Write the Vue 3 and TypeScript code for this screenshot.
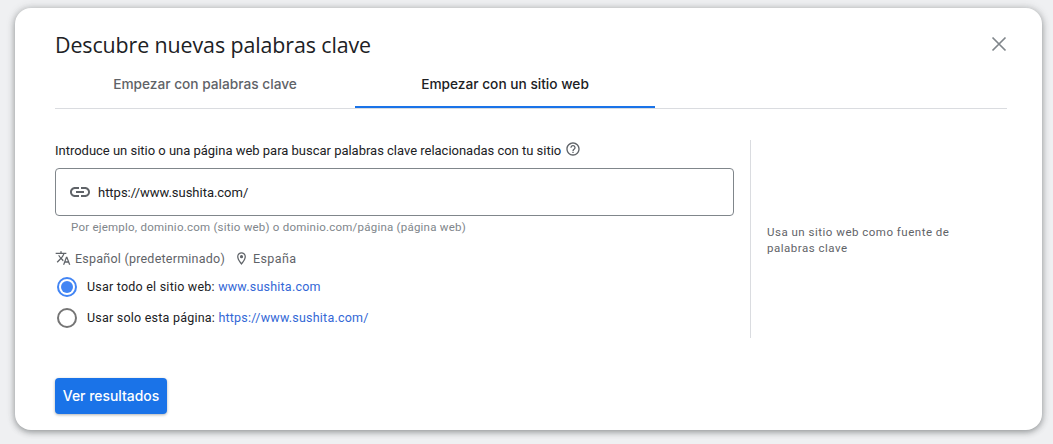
<script setup lang="ts">
const title = 'Descubre nuevas palabras clave'
</script>

<template>
  <div class="page">
    <section class="card">
      <header class="head">
        <h1>{{ title }}</h1>
        <svg class="close" viewBox="0 0 16 16" width="16" height="16"><path d="M1.5 1.5 14.5 14.5M14.5 1.5 1.5 14.5" stroke="#80868b" stroke-width="1.7" fill="none"/></svg>
      </header>
      <nav class="tabs">
        <div class="tab">Empezar con palabras clave</div>
        <div class="tab active">Empezar con un sitio web</div>
      </nav>
      <div class="body">
        <div class="main">
          <div class="label">
            <span>Introduce un sitio o una página web para buscar palabras clave relacionadas con tu sitio</span>
            <svg class="help" viewBox="0 0 24 24" width="16" height="16"><path fill="#5f6368" d="M11 18h2v-2h-2v2zm1-16C6.48 2 2 6.48 2 12s4.48 10 10 10 10-4.48 10-10S17.52 2 12 2zm0 18c-4.41 0-8-3.59-8-8s3.59-8 8-8 8 3.59 8 8-3.59 8-8 8zm0-14c-2.21 0-4 1.79-4 4h2c0-1.1.9-2 2-2s2 .9 2 2c0 2-3 1.75-3 5h2c0-2.25 3-2.5 3-5 0-2.21-1.79-4-4-4z"/></svg>
          </div>
          <div class="field">
            <svg viewBox="0 0 24 24" width="24" height="24"><path fill="#5f6368" d="M3.9 12c0-1.71 1.39-3.1 3.1-3.1h4V7H7c-2.76 0-5 2.24-5 5s2.24 5 5 5h4v-1.9H7c-1.71 0-3.1-1.39-3.1-3.1zM8 13h8v-2H8v2zm9-6h-4v1.9h4c1.71 0 3.1 1.39 3.1 3.1s-1.39 3.1-3.1 3.1h-4V17h4c2.76 0 5-2.24 5-5s-2.24-5-5-5z"/></svg>
            <span>https://www.sushita.com/</span>
          </div>
          <div class="hint">Por ejemplo, dominio.com (sitio web) o dominio.com/página (página web)</div>
          <div class="locale">
            <svg viewBox="0 0 24 24" width="16" height="16"><path fill="#5f6368" d="M12.87 15.07l-2.54-2.51.03-.03c1.74-1.94 2.98-4.17 3.71-6.53H17V4h-7V2H8v2H1v1.99h11.17C11.5 7.92 10.44 9.75 9 11.35 8.07 10.32 7.3 9.19 6.69 8h-2c.73 1.63 1.73 3.17 2.98 4.56l-5.09 5.02L4 19l5-5 3.11 3.11.76-2.04zM18.5 10h-2L12 22h2l1.12-3h4.75L21 22h2l-4.5-12zm-2.62 7l1.62-4.33L19.12 17h-3.24z"/></svg>
            <span>Español (predeterminado)</span>
            <svg class="pin" viewBox="0 0 24 24" width="15" height="15"><path fill="#5f6368" d="M12 2C8.13 2 5 5.13 5 9c0 5.25 7 13 7 13s7-7.75 7-13c0-3.87-3.13-7-7-7zM7 9c0-2.76 2.24-5 5-5s5 2.24 5 5c0 2.88-2.88 7.19-5 9.88C9.92 16.21 7 11.85 7 9z"/><circle fill="#5f6368" cx="12" cy="9" r="2.5"/></svg>
            <span class="country">España</span>
          </div>
          <div class="radio first">
            <span class="dot on"></span>
            <span>Usar todo el sitio web: <a>www.sushita.com</a></span>
          </div>
          <div class="radio">
            <span class="dot"></span>
            <span>Usar solo esta página: <a>https://www.sushita.com/</a></span>
          </div>
        </div>
        <aside class="side">Usa un sitio web como fuente de palabras clave</aside>
      </div>
      <button class="cta">Ver resultados</button>
    </section>
  </div>
</template>

<style>
html, body { margin: 0; background: #eef0f2; }
</style>

<style scoped>
.page {
  width: 1053px;
  height: 444px;
  box-sizing: border-box;
  padding: 8px 11px 14px 15px;
  background: #eff0f2;
  overflow: hidden;
  font-family: Roboto, "Liberation Sans", sans-serif;
}
.card {
  height: 422px;
  box-sizing: border-box;
  padding: 0 35px 0 40px;
  background: #fff;
  border-radius: 16px;
  box-shadow: 0 2px 6px rgba(60, 64, 67, 0.45), 0 0 10px rgba(60, 64, 67, 0.18);
  display: flex;
  flex-direction: column;
  align-items: flex-start;
}
.head {
  width: 100%;
  height: 58px;
  display: flex;
  justify-content: space-between;
  align-items: flex-start;
  padding-top: 23px;
  box-sizing: border-box;
}
h1 {
  margin: 0;
  font: 400 21.4px/28px "Open Sans", sans-serif;
  color: #202124;
  letter-spacing: -0.1px;
}
.close { margin-top: 5px; }
.tabs {
  width: 952px;
  height: 42px;
  display: flex;
  border-bottom: 1px solid #dadce0;
}
.tab {
  width: 300px;
  height: 42px;
  box-sizing: border-box;
  text-align: center;
  font: 500 13.7px/36px Inter, sans-serif;
  color: #5f6368;
}
.tab.active {
  color: #202124;
  border-bottom: 2px solid #1a73e8;
}
.body {
  width: 100%;
  margin-top: 31px;
  display: flex;
  height: 198px;
}
.main {
  width: 695px;
  border-right: 1px solid #dadce0;
}
.label {
  display: flex;
  align-items: flex-start;
  gap: 4px;
  height: 28px;
  font-size: 13px;
  line-height: 22px;
  color: #202124;
  letter-spacing: -0.015px;
}
.help { margin-top: 1px; }
.field {
  width: 679px;
  height: 48px;
  box-sizing: border-box;
  border: 1px solid #80868b;
  border-radius: 4px;
  display: flex;
  align-items: center;
  gap: 6px;
  padding-left: 12px;
  font-size: 13px;
  color: #202124;
  letter-spacing: -0.02px;
}
.hint {
  margin: 4px 0 0 16px;
  font-size: 11.5px;
  line-height: 14px;
  color: #80868b;
  letter-spacing: 0.23px;
}
.locale {
  margin-top: 14px;
  height: 20px;
  display: flex;
  align-items: center;
  gap: 4px;
  font-size: 12.5px;
  color: #5f6368;
  letter-spacing: 0.23px;
}
.pin { margin-left: 5px; margin-right: 0; }
.country { letter-spacing: 0.4px; }
.radio {
  height: 31px;
  display: flex;
  align-items: center;
  gap: 10px;
  padding-left: 2px;
  font-size: 12.5px;
  color: #202124;
  letter-spacing: 0.22px;
}
.radio.first { margin-top: 3px; }
.radio a { color: #3367d6; }
.dot {
  width: 20px;
  height: 20px;
  box-sizing: border-box;
  border: 2px solid #757575;
  border-radius: 50%;
  display: flex;
  align-items: center;
  justify-content: center;
}
.dot.on { border-color: #4285f4; }
.dot.on::after {
  content: "";
  width: 12px;
  height: 12px;
  border-radius: 50%;
  background: #4285f4;
}
.side {
  width: 200px;
  margin: 84px 0 0 16px;
  font-size: 11.5px;
  line-height: 16px;
  color: #5f6368;
  letter-spacing: 0.5px;
}
.cta {
  margin-top: 40px;
  width: 112px;
  height: 36px;
  padding: 0;
  border: none;
  border-radius: 4px;
  background: #1a73e8;
  color: #fff;
  font: 500 13.9px/36px Inter, sans-serif;
  box-shadow: 0 1px 3px rgba(60, 64, 67, 0.4);
}
</style>
